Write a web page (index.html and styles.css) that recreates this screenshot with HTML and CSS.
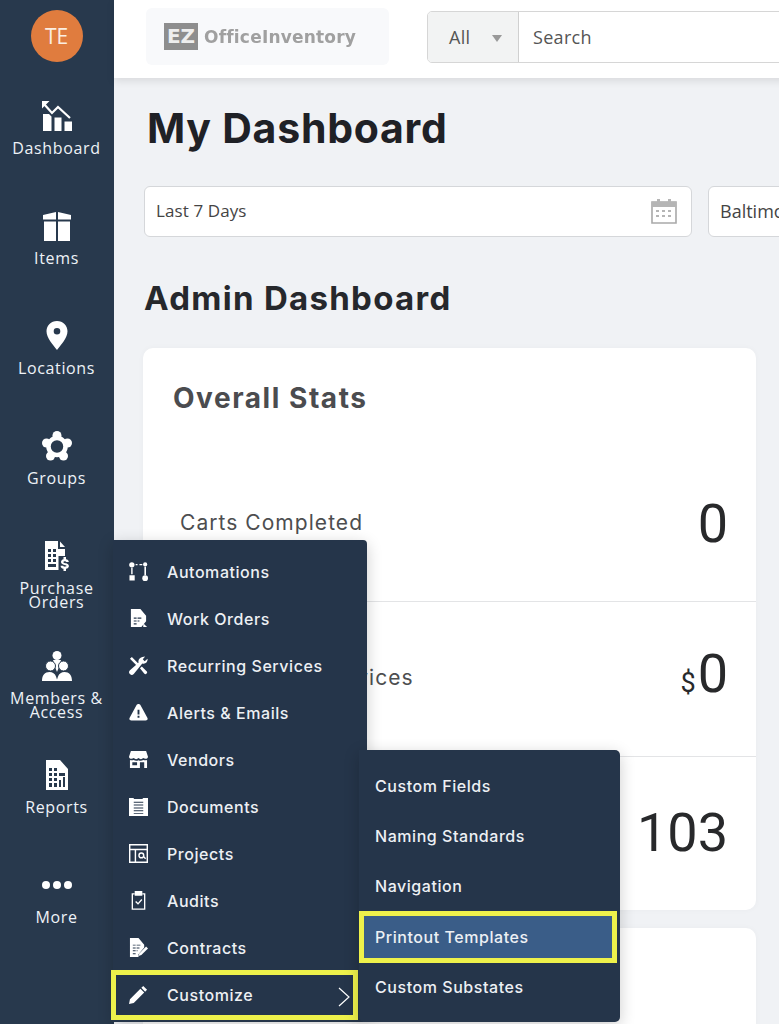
FILE: index.html
```html
<!DOCTYPE html>
<html lang="en">
<head>
<meta charset="utf-8">
<title>My Dashboard</title>
<link rel="stylesheet" href="styles.css">
</head>
<body>
<div class="app">
  <aside class="sidebar">
    <div class="avatar">TE</div>
    <nav class="nav">
      <a class="nav-item">
        <svg class="nav-icon" viewBox="0 0 30 30"><path fill="none" stroke="currentColor" stroke-width="2.200" d="M2 3l8 9 6-6 12 11"/><path d="M0 0h7.500L0 7.500zM1 13h6l2.500 2.500V30H1zM12.500 16.500h7V30h-7zM22.500 20.500h7.500V30h-7.500z"/></svg>
        <span class="nav-label">Dashboard</span>
      </a>
      <a class="nav-item">
        <svg class="nav-icon" viewBox="0 0 30 30"><path d="M1 4L14 1v7.500H1zM16 1l13 3v4.500H16zM2 10.500h12V31H2zM16 10.500h12V31H16z"/></svg>
        <span class="nav-label">Items</span>
      </a>
      <a class="nav-item">
        <svg class="nav-icon" viewBox="0 0 30 30"><path fill-rule="evenodd" d="M15 0c6 0 10.500 4.500 10.500 10.300C25.500 17 19 24 15 29 11 24 4.500 17 4.500 10.300 4.500 4.500 9 0 15 0zm0 7a3.300 3.300 0 100 6.600A3.300 3.300 0 0015 7z"/></svg>
        <span class="nav-label">Locations</span>
      </a>
      <a class="nav-item">
        <svg class="nav-icon" viewBox="0 0 30 30"><circle cx="15" cy="15.500" r="8.500" fill="none" stroke="currentColor" stroke-width="4.500"/><circle cx="15" cy="4.500" r="4.500"/><circle cx="25.500" cy="12" r="4.500"/><circle cx="21.500" cy="25" r="4.500"/><circle cx="8.500" cy="25" r="4.500"/><circle cx="4.500" cy="12" r="4.500"/></svg>
        <span class="nav-label">Groups</span>
      </a>
      <a class="nav-item">
        <svg class="nav-icon" viewBox="0 0 30 30"><path fill-rule="evenodd" d="M3 0h13v8h7v7h-6.500v14H3zM18 0.500L23 6h-5zM6 8v3h3V8zm5 0v3h3V8zm-5 5v3h3v-3zm5 0v3h3v-3zm-5 5v3h3v-3zm5 0v3h3v-3zM6 23v3h8v-3z"/><path d="M21.500 16h2.500v2.200c1.800.300 2.800 1.300 2.800 2.800h-2.600c0-.900-2.800-1-2.800.200 0 1.300 5.500.400 5.500 3.900 0 1.500-1.100 2.500-2.900 2.700V30h-2.500v-2.200c-1.800-.300-2.900-1.300-2.900-3h2.600c0 1.100 3.300 1.200 3.300 0 0-1.500-5.500-.500-5.500-3.900 0-1.500 1.100-2.400 2.500-2.700V16z"/></svg>
        <span class="nav-label">Purchase Orders</span>
      </a>
      <a class="nav-item">
        <svg class="nav-icon" viewBox="0 0 30 30"><circle cx="15" cy="4.500" r="4.500"/><path d="M11 9h8l-2 7-2 5-2-5z"/><circle class="head-gap" cx="8.500" cy="15" r="5"/><circle class="head-gap" cx="21.500" cy="15" r="5"/><path d="M0 30c0-6 3-9 7.500-9 3 0 5.500 1.500 6.500 4.500l1 3 1-3c1-3 3.500-4.500 6.500-4.500 4.500 0 7.500 3 7.500 9z"/></svg>
        <span class="nav-label">Members &amp; Access</span>
      </a>
      <a class="nav-item">
        <svg class="nav-icon" viewBox="0 0 30 30"><path fill-rule="evenodd" d="M4 0h14l8 9v21H4zM7 8v3h3V8zm5 0v3h3V8zm-5 5v3h3v-3zm5 0v3h3v-3zm5 0v3h6v-3zM7 18v3h3v-3zm5 0v3h3v-3zM7 23v4h3v-4zm5 0v4h3v-4zm5-3v7h2v-7zm4-3v10h2V17z"/></svg>
        <span class="nav-label">Reports</span>
      </a>
      <a class="nav-item">
        <svg class="nav-icon" viewBox="0 0 30 30"><circle cx="4" cy="15" r="4"/><circle cx="15" cy="15" r="4"/><circle cx="26" cy="15" r="4"/></svg>
        <span class="nav-label">More</span>
      </a>
    </nav>
  </aside>

  <div class="main">
    <header class="topbar">
      <div class="logo">
        <span class="logo-mark">EZ</span>
        <span class="logo-text">OfficeInventory</span>
      </div>
      <div class="search">
        <div class="search-scope">All <span class="caret"></span></div>
        <div class="search-input">Search</div>
      </div>
    </header>
    <main class="content">
      <h1 class="page-title">My Dashboard</h1>
      <div class="filters">
        <div class="field field-date">
          <span>Last 7 Days</span>
          <svg class="cal" viewBox="0 0 28 28"><path fill="none" stroke="#a9a9a9" stroke-width="1.600" d="M2 5h24v21H2z"/><path fill="#b5b5b5" d="M2 5h24v5H2zM7 2h3v4H7zM18 2h3v4h-3zM6 13h3v2H6zM12 13h3v2h-3zM18 13h3v2h-3zM6 18h3v2H6zM12 18h3v2h-3zM18 18h3v2h-3z"/></svg>
        </div>
        <div class="field field-loc">Baltimore</div>
      </div>
      <h2 class="section-title">Admin Dashboard</h2>
      <section class="card">
        <h3 class="card-title">Overall Stats</h3>
        <div class="stat"><span class="stat-label">Carts Completed</span><span class="stat-value">0</span></div>
        <div class="stat"><span class="stat-label">Outstanding Services</span><span class="stat-value"><small>$</small>0</span></div>
        <div class="stat stat-last"><span class="stat-value">103</span></div>
      </section>
      <section class="card card-next"></section>
    </main>
  </div>

  <div class="menu">
    <a class="menu-item">
      <svg class="menu-icon" viewBox="0 0 20 20"><circle cx="3" cy="3" r="2.800"/><circle cx="17" cy="2.500" r="2.200"/><circle cx="17" cy="17" r="3"/><path d="M0.500 14h5.500v5.500H0.500zM2.300 6h1.500v7H2.300zM16.200 5h1.700v9h-1.700zM7 2h2v1.500H7zM11 2h3v1.500h-3z"/></svg>
      Automations
    </a>
    <a class="menu-item">
      <svg class="menu-icon" viewBox="0 0 20 20"><path fill-rule="evenodd" d="M2 0h10l6 7v6l-5 6H2zM5 9v1.200h3V9zm4 0v1.200h4V9zM5 12v1.200h3V12zm4 0v1.200h2V12zM5 15v1.200h3V15z"/><path d="M15 15l4 4h-4z"/></svg>
      Work Orders
    </a>
    <a class="menu-item">
      <svg class="menu-icon" viewBox="0 0 20 20"><path d="M1 3l2-2 6 6 1.500 1.500-2 2L7 9zM14 1l3-.500-2.500 3 2 2 3-2.500c.500 3-2 6-5.500 5L5 19a2 2 0 01-4-4l9-8c-.500-3 1-5 4-6zM11.500 13l2-2 5 5a1.500 1.500 0 01-2.500 2.500z"/></svg>
      Recurring Services
    </a>
    <a class="menu-item">
      <svg class="menu-icon" viewBox="0 0 20 20"><path fill-rule="evenodd" d="M10 1c1 0 1.800.600 2.300 1.500l7 13c.800 1.500 0 3-1.800 3H2.500C.700 18.500-.100 17 .700 15.500l7-13C8.200 1.600 9 1 10 1zM9 7v5h2V7zm0 6.500v2h2v-2z"/></svg>
      Alerts &amp; Emails
    </a>
    <a class="menu-item">
      <svg class="menu-icon" viewBox="0 0 20 20"><path fill-rule="evenodd" d="M2 1h16l2 6c0 2-2.500 3-5 1.500-1.500 1.500-3.500 1.500-5 0-1.500 1.500-3.500 1.500-5 0C2.500 10 0 9 0 7zM1 10.500c1 .500 2.500.500 4 0 1.500 1 3.500 1 5 .200 1.500.800 3.500.800 5-.200 1.500.500 3 .500 4 0V19H1zM3.500 13v3h5v-3zm8 0v6H16v-6z"/></svg>
      Vendors
    </a>
    <a class="menu-item">
      <svg class="menu-icon" viewBox="0 0 20 20"><path fill-rule="evenodd" d="M0 1h5v1h9l1-1h5v19H0zM5 5v1h10V5zm0 3v1h10V8zm0 3v1h10v-1zm0 3v1h10v-1zm0 3v1h10v-1z"/></svg>
      Documents
    </a>
    <a class="menu-item">
      <svg class="menu-icon" viewBox="0 0 20 20"><path fill-rule="evenodd" d="M0 0h20v20H0zm1.500 1.500V5h17V1.500zm0 5V18.500H6V6.500zm6 0V18.500h11V6.500z"/><circle cx="13" cy="12" r="2.500" fill="none" stroke="currentColor" stroke-width="1.500"/><path d="M15 14l1-1 2 2-1 1z"/></svg>
      Projects
    </a>
    <a class="menu-item">
      <svg class="menu-icon" viewBox="0 0 20 20"><path fill="none" stroke="currentColor" stroke-width="1.400" d="M6 3H3.500v16h13V3H14"/><path d="M6 0h8v5H6z"/><path fill="none" stroke="currentColor" stroke-width="1.400" d="M7 11l2.500 2.500L13.500 9"/></svg>
      Audits
    </a>
    <a class="menu-item">
      <svg class="menu-icon" viewBox="0 0 20 20"><path fill-rule="evenodd" d="M1 0h9l6 7v3l-6 7v3H1zM4 7v1h3V7zm4 0v1h4V7zM4 10v1h3v-1zm4 0v1h3v-1zM4 13v1h3v-1zm4 0v1h1v-1zM4 16v1h3v-1z"/><path d="M18 9l2 2-7 7-3 1 1-3z"/></svg>
      Contracts
    </a>
    <a class="menu-item menu-item-marked">
      <svg class="menu-icon" viewBox="0 0 20 20"><path d="M15 1l4 4-2 2-4-4zM12 4l4 4L5 19l-5 1 1-5z"/></svg>
      Customize
      <svg class="chevron" viewBox="0 0 12 20"><path fill="none" stroke="currentColor" stroke-width="1.200" d="M1 1l10 9-10 9"/></svg>
    </a>
  </div>

  <div class="submenu">
    <a class="sub-item">Custom Fields</a>
    <a class="sub-item">Naming Standards</a>
    <a class="sub-item">Navigation</a>
    <a class="sub-item sub-item-marked">Printout Templates</a>
    <a class="sub-item">Custom Substates</a>
  </div>
</div>
</body>
</html>
```

FILE: styles.css
```css
*, *::before, *::after { box-sizing: border-box; }

html, body {
  margin: 0;
  height: 1024px;
  overflow: hidden;
}

body {
  font-family: "Open Sans", sans-serif;
  background: #f0f2f5;
}

.app {
  position: relative;
  display: flex;
  width: 779px;
  height: 1024px;
  overflow: hidden;
}

/* Sidebar */
.sidebar {
  flex: 0 0 114px;
  background: #28394d;
  color: #eef2f7;
  padding-top: 10px;
  display: flex;
  flex-direction: column;
  align-items: center;
}

.avatar {
  width: 52px;
  height: 52px;
  margin-left: -1px;
  border-radius: 50%;
  background: #e07c3e;
  color: #fbeee2;
  font-size: 21px;
  line-height: 52px;
  text-align: center;
}

.nav {
  margin-top: 39px;
  width: 100%;
  display: flex;
  flex-direction: column;
}

.nav-item {
  height: 109.910px;
  padding-right: 1px;
  display: flex;
  flex-direction: column;
  align-items: center;
  gap: 10px;
}

.nav-icon {
  width: 30px;
  height: 30px;
  flex: none;
  fill: #fff;
  color: #fff;
}

.head-gap {
  stroke: #28394d;
  stroke-width: 1;
}

.nav-label {
  width: 100px;
  font-size: 16px;
  line-height: 14px;
  letter-spacing: 0.650px;
  text-align: center;
}

/* Top bar */
.main {
  flex: 1;
  min-width: 0;
  display: flex;
  flex-direction: column;
}

.topbar {
  flex: 0 0 78px;
  background: #fff;
  box-shadow: 0 3px 8px rgba(0, 0, 0, 0.1);
  padding: 8px 0 0 32px;
  display: flex;
  align-items: flex-start;
  gap: 38px;
  position: relative;
  width: 700px;
}

.logo {
  flex: 0 0 243px;
  height: 57px;
  background: #f8f9fb;
  border-radius: 6px;
  padding-left: 18px;
  display: flex;
  align-items: center;
  gap: 6px;
}

.logo-mark {
  width: 34px;
  height: 27px;
  background: #8e8e8e;
  color: #eee;
  font-family: "DejaVu Sans", sans-serif;
  font-weight: 700;
  font-size: 20px;
  line-height: 27px;
  text-align: center;
}

.logo-text {
  color: #a0a0a0;
  font-family: "DejaVu Sans", sans-serif;
  font-weight: 700;
  font-size: 17px;
  letter-spacing: 0.200px;
  filter: blur(0.4px);
}

.search {
  flex: none;
  width: 460px;
  height: 52px;
  margin-top: 3px;
  border: 1px solid #d6d6d6;
  border-radius: 5px;
  display: flex;
  font-size: 18px;
  color: #555;
  overflow: hidden;
}

.search-scope {
  flex: 0 0 91px;
  background: #f2f3f3;
  border-right: 1px solid #d0d0d0;
  padding-left: 21px;
  line-height: 50px;
  letter-spacing: 0.300px;
  position: relative;
}

.caret {
  position: absolute;
  left: 64px;
  top: 23px;
  border: 5px solid transparent;
  border-top: 7px solid #999;
  border-bottom: 0;
}

.search-input {
  flex: 1;
  padding-left: 14px;
  line-height: 50px;
  letter-spacing: 0.300px;
}

/* Content */
.content {
  flex: 1;
  padding: 24px 23px 0 29px;
  min-height: 0;
}

.page-title {
  margin: 0 0 0 4px;
  font-family: Inter, sans-serif;
  font-weight: 700;
  font-size: 41px;
  line-height: 52px;
  letter-spacing: 0.750px;
  color: #1f2126;
}

.filters {
  margin-top: 32px;
  display: flex;
  gap: 16px;
  width: 800px;
}

.field {
  height: 51px;
  background: #fff;
  border: 1px solid #d5d7da;
  border-radius: 6px;
  display: flex;
  align-items: center;
  color: #444;
}

.field-date {
  flex: 0 0 548px;
  margin-left: 1px;
  font-size: 17px;
  letter-spacing: 0.100px;
  padding: 0 13px 2px 11px;
  justify-content: space-between;
}

.field-loc {
  flex: 1;
  font-size: 18px;
  padding: 0 0 1px 11px;
}

.cal {
  width: 28px;
  height: 28px;
}

.section-title {
  margin: 36px 0 0 1px;
  font-family: Inter, sans-serif;
  font-weight: 700;
  font-size: 33px;
  line-height: 50px;
  letter-spacing: 1.300px;
  color: #26282c;
}

.card {
  margin-top: 25px;
  background: #fff;
  border-radius: 10px;
  box-shadow: 0 0 6px rgba(0, 0, 0, 0.03);
}

.card-title {
  margin: 0;
  height: 99px;
  padding: 30px 0 0 30px;
  font-family: Inter, sans-serif;
  font-weight: 700;
  font-size: 28px;
  line-height: 40px;
  letter-spacing: 1.550px;
  color: #4b4c4f;
}

.stat {
  height: 155px;
  padding: 0 28px 0 37px;
  border-bottom: 1px solid #e3e4e6;
  display: flex;
  align-items: center;
  justify-content: space-between;
}

.stat-last {
  height: 153px;
  border-bottom: 0;
  justify-content: flex-end;
}

.stat-label {
  margin-bottom: 3px;
  font-family: Inter, sans-serif;
  font-size: 21px;
  letter-spacing: 1.050px;
  color: #4d4e50;
}

.stat-value {
  margin-bottom: 1px;
  font-family: Roboto, sans-serif;
  font-size: 54px;
  line-height: 60px;
  color: #28292b;
}

.stat-value small {
  font-size: 27px;
  margin-right: 2px;
}

.card-next {
  margin-top: 18px;
  height: 120px;
}

/* Flyout menus lie over the page */
.menu {
  position: absolute;
  left: 113px;
  top: 540px;
  width: 254px;
  height: 482px;
  padding-top: 8px;
  background: #25354a;
  border-radius: 0 4px 4px 0;
  box-shadow: 0 4px 16px rgba(0, 0, 0, 0.2);
  color: #edf0f4;
  display: flex;
  flex-direction: column;
}

.menu-item {
  position: relative;
  flex: 0 0 47px;
  padding-left: 16px;
  display: flex;
  align-items: center;
  gap: 19px;
  font-family: Inter, sans-serif;
  font-size: 16px;
  font-weight: 500;
  letter-spacing: 0.550px;
}

.menu-icon {
  width: 19px;
  height: 19px;
  flex: none;
  fill: #fff;
  color: #fff;
}

.menu-item-marked::after {
  content: "";
  position: absolute;
  left: -2px;
  right: 9px;
  top: -1px;
  height: 50px;
  border: 5px solid #eef14b;
}

.chevron {
  position: absolute;
  left: 225px;
  top: 16px;
  width: 12px;
  height: 20px;
  color: #fff;
}

.submenu {
  position: absolute;
  left: 359px;
  top: 750px;
  width: 261px;
  height: 272px;
  padding-top: 10.500px;
  background: #25354a;
  border-radius: 0 5px 5px 5px;
  box-shadow: 0 4px 16px rgba(0, 0, 0, 0.2);
  color: #edf0f4;
  display: flex;
  flex-direction: column;
}

.sub-item {
  position: relative;
  flex: 0 0 50.400px;
  padding-left: 16px;
  display: flex;
  align-items: center;
  font-family: Inter, sans-serif;
  font-size: 16px;
  font-weight: 500;
  letter-spacing: 0.550px;
}

.sub-item-marked {
  isolation: isolate;
}

.sub-item-marked::before {
  content: "";
  position: absolute;
  z-index: -1;
  left: 0;
  right: 3px;
  top: -1px;
  height: 52px;
  background: #3a5d88;
  border: 5px solid #eef14b;
}
```
